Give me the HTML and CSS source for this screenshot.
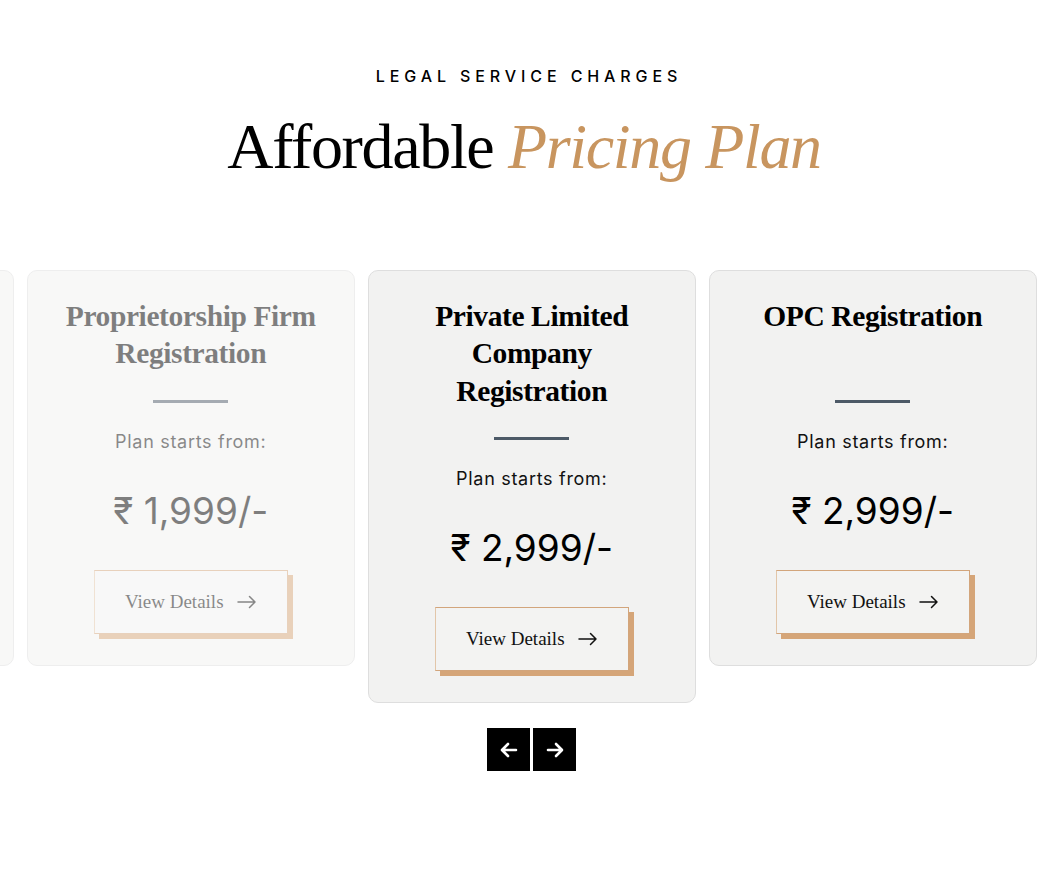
FILE: index.html
```html
<!DOCTYPE html>
<html lang="en">
<head>
<meta charset="utf-8">
<title>Affordable Pricing Plan</title>
<link rel="stylesheet" href="styles.css">
</head>
<body>
<section class="pricing">
  <header class="intro">
    <p class="eyebrow">LEGAL SERVICE CHARGES</p>
    <h2 class="heading">Affordable <em>Pricing Plan</em></h2>
  </header>

  <div class="viewport">
    <div class="track">
      <article class="card is-faded">
        <h3 class="card-title">Partnership Firm Registration</h3>
        <div class="divider"></div>
        <p class="starts">Plan starts from:</p>
        <p class="price">₹ 1,499/-</p>
        <a class="btn" href="#">View Details
          <svg class="btn-arrow" width="20" height="14" viewBox="0 0 20 14" fill="none" stroke="currentColor" stroke-width="1.5" stroke-linecap="round" stroke-linejoin="round"><path d="M1 7h17M12.5 1.5L18 7l-5.5 5.5"/></svg>
        </a>
      </article>

      <article class="card is-faded">
        <h3 class="card-title">Proprietorship Firm Registration</h3>
        <div class="divider"></div>
        <p class="starts">Plan starts from:</p>
        <p class="price">₹ 1,999/-</p>
        <a class="btn" href="#">View Details
          <svg class="btn-arrow" width="20" height="14" viewBox="0 0 20 14" fill="none" stroke="currentColor" stroke-width="1.5" stroke-linecap="round" stroke-linejoin="round"><path d="M1 7h17M12.5 1.5L18 7l-5.5 5.5"/></svg>
        </a>
      </article>

      <article class="card">
        <h3 class="card-title">Private Limited Company Registration</h3>
        <div class="divider"></div>
        <p class="starts">Plan starts from:</p>
        <p class="price">₹ 2,999/-</p>
        <a class="btn" href="#">View Details
          <svg class="btn-arrow" width="20" height="14" viewBox="0 0 20 14" fill="none" stroke="currentColor" stroke-width="1.5" stroke-linecap="round" stroke-linejoin="round"><path d="M1 7h17M12.5 1.5L18 7l-5.5 5.5"/></svg>
        </a>
      </article>

      <article class="card">
        <h3 class="card-title">OPC Registration</h3>
        <div class="divider"></div>
        <p class="starts">Plan starts from:</p>
        <p class="price">₹ 2,999/-</p>
        <a class="btn" href="#">View Details
          <svg class="btn-arrow" width="20" height="14" viewBox="0 0 20 14" fill="none" stroke="currentColor" stroke-width="1.5" stroke-linecap="round" stroke-linejoin="round"><path d="M1 7h17M12.5 1.5L18 7l-5.5 5.5"/></svg>
        </a>
      </article>

      <article class="card">
        <h3 class="card-title">LLP Registration</h3>
        <div class="divider"></div>
        <p class="starts">Plan starts from:</p>
        <p class="price">₹ 3,499/-</p>
        <a class="btn" href="#">View Details
          <svg class="btn-arrow" width="20" height="14" viewBox="0 0 20 14" fill="none" stroke="currentColor" stroke-width="1.5" stroke-linecap="round" stroke-linejoin="round"><path d="M1 7h17M12.5 1.5L18 7l-5.5 5.5"/></svg>
        </a>
      </article>
    </div>
  </div>

  <nav class="nav" aria-label="Carousel navigation">
    <button class="nav-btn" type="button" aria-label="Previous">
      <svg width="20" height="20" viewBox="0 0 20 20" fill="none" stroke="#fff" stroke-width="2.6" stroke-linecap="round" stroke-linejoin="round"><path d="M17 10H3.5M9 4L3 10l6 6"/></svg>
    </button>
    <button class="nav-btn" type="button" aria-label="Next">
      <svg width="20" height="20" viewBox="0 0 20 20" fill="none" stroke="#fff" stroke-width="2.6" stroke-linecap="round" stroke-linejoin="round"><path d="M3 10h13.5M11 4l6 6-6 6"/></svg>
    </button>
  </nav>
</section>
</body>
</html>
```

FILE: styles.css
```css
* {
  box-sizing: border-box;
}

html, body {
  margin: 0;
  padding: 0;
  background: #ffffff;
}

body {
  font-family: "Inter", "DejaVu Sans", sans-serif;
  color: #000;
}

.pricing {
  padding-top: 66px;
}

.intro {
  padding-left: 16px;
  text-align: center;
}

.eyebrow {
  margin: 0;
  font-family: "Inter", sans-serif;
  font-size: 16px;
  line-height: 20px;
  font-weight: 500;
  letter-spacing: 4.9px;
  color: #000;
}

.heading {
  margin: 23px 0 0;
  padding-right: 10px;
  font-family: "Liberation Serif", "DejaVu Serif", serif;
  font-weight: 400;
  font-size: 64px;
  line-height: 1.2;
  letter-spacing: -1.35px;
  color: #000;
}

.heading em {
  font-style: italic;
  color: #c8955f;
}

.viewport {
  margin-top: 84px;
  width: 100%;
  overflow: hidden;
}

.track {
  display: flex;
  align-items: flex-start;
  gap: 13.5px;
  margin-left: -314px;
}

.card {
  flex: 0 0 327.5px;
  background: #f2f2f1;
  border: 1px solid #dedede;
  border-radius: 10px;
  padding: 27px 30px 31px;
  display: flex;
  flex-direction: column;
  align-items: center;
  text-align: center;
}

.card.is-faded {
  opacity: 0.5;
}

.card-title {
  margin: 0 0 27px;
  min-height: 75px;
  font-family: "Liberation Serif", "DejaVu Serif", serif;
  font-weight: 700;
  font-size: 29.5px;
  line-height: 37.5px;
  letter-spacing: -0.4px;
  color: #000;
}

.divider {
  width: 75px;
  height: 3px;
  background: #4d5a67;
}

.starts {
  margin: 25px 0 0;
  font-size: 18px;
  line-height: 27px;
  letter-spacing: 0.7px;
  color: #111;
}

.price {
  margin: 32px 0 0;
  font-size: 37px;
  line-height: 48px;
  font-weight: 400;
  color: #000;
}

.btn {
  margin-top: 35px;
  height: 64px;
  padding: 0 30px;
  display: inline-flex;
  align-items: center;
  gap: 13px;
  border: 1px solid #d2a57c;
  border-left-color: #e2c6a9;
  background: #f3f3f2;
  box-shadow: 5px 5px 0 #d5a578;
  font-family: "Liberation Serif", "DejaVu Serif", serif;
  font-size: 19px;
  color: #111;
  text-decoration: none;
}

.btn-arrow {
  display: block;
  color: #111;
}

.nav {
  margin-top: 25px;
  padding-left: 21px;
  display: flex;
  justify-content: center;
  gap: 3px;
}

.nav-btn {
  width: 43px;
  height: 43px;
  padding: 0;
  border: 0;
  background: #000;
  display: flex;
  align-items: center;
  justify-content: center;
  cursor: pointer;
}
```
